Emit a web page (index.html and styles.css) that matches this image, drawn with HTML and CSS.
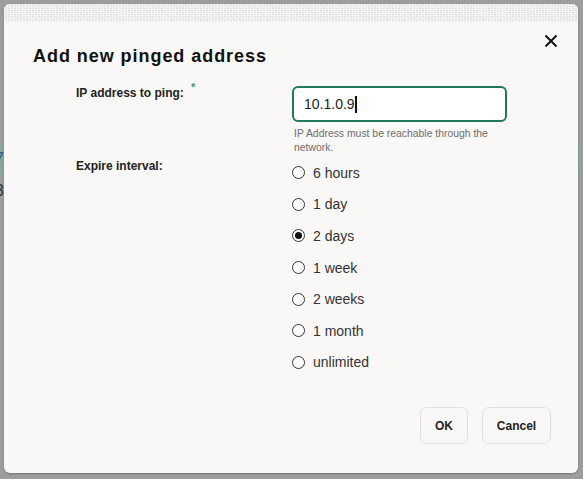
FILE: index.html
```
<!DOCTYPE html>
<html lang="en">
<head>
<meta charset="utf-8">
<title>Add new pinged address</title>
<link rel="stylesheet" href="styles.css">
</head>
<body>
<div class="page">
  <div class="page-row teal"><span class="cell blue">7</span></div>
  <div class="page-row"><span class="cell">3</span></div>
</div>
<div class="overlay">
  <div class="dialog" role="dialog" aria-labelledby="dlg-title">
    <div class="dialog-band"></div>
    <div class="dialog-head">
      <h1 id="dlg-title" class="dialog-title">Add new pinged address</h1>
      <button class="close" aria-label="Close">
        <svg width="14" height="14" viewBox="0 0 14 14"><path d="M1.5 1.5 L12.5 12.5 M12.5 1.5 L1.5 12.5" stroke="#111" stroke-width="2" fill="none"/></svg>
      </button>
    </div>
    <div class="form">
      <div class="label">IP address to ping:<span class="req">*</span></div>
      <div class="field">
        <div class="input"><span class="value">10.1.0.9</span><span class="caret"></span></div>
        <div class="hint">IP Address must be reachable through the network.</div>
      </div>
      <div class="label label-2">Expire interval:</div>
      <div class="field radios">
        <div class="radio"><span class="dot"></span><span class="rlabel">6 hours</span></div>
        <div class="radio"><span class="dot"></span><span class="rlabel">1 day</span></div>
        <div class="radio checked"><span class="dot"></span><span class="rlabel">2 days</span></div>
        <div class="radio"><span class="dot"></span><span class="rlabel">1 week</span></div>
        <div class="radio"><span class="dot"></span><span class="rlabel">2 weeks</span></div>
        <div class="radio"><span class="dot"></span><span class="rlabel">1 month</span></div>
        <div class="radio"><span class="dot"></span><span class="rlabel">unlimited</span></div>
      </div>
    </div>
    <div class="footer">
      <button class="btn">OK</button>
      <button class="btn">Cancel</button>
    </div>
  </div>
</div>
</body>
</html>
```
FILE: styles.css
```
html, body {
  margin: 0;
  padding: 0;
}
body {
  width: 583px;
  height: 479px;
  background: #9d9d9d;
  font-family: "Liberation Sans", Arial, sans-serif;
  overflow: hidden;
  position: relative;
}
.page {
  padding-top: 143px;
}
.page-row {
  height: 32px;
  display: flex;
  align-items: center;
}
.page-row.teal {
  background: #8ea59e;
}
.cell {
  font-size: 16px;
  color: #333;
  margin-left: -5px;
}
.cell.blue {
  color: #2a5a8a;
}
.overlay {
  position: absolute;
  inset: 0;
  padding: 4px 5px 6px 4px;
  box-sizing: border-box;
  display: flex;
}
.dialog {
  flex: 1;
  background: #f9f8f7;
  border-radius: 6px;
  overflow: hidden;
  display: flex;
  flex-direction: column;
  box-shadow: 0 1px 2px rgba(0,0,0,0.25);
}
.dialog-band {
  height: 18px;
  flex: none;
  background-color: #e6e6e5;
  background-image:
    repeating-linear-gradient(90deg, rgba(255,255,255,0.55) 0 1px, transparent 1px 3px),
    repeating-linear-gradient(0deg, rgba(255,255,255,0.45) 0 1px, transparent 1px 2px),
    repeating-linear-gradient(45deg, rgba(200,200,200,0.35) 0 1px, transparent 1px 4px);
}
.dialog-head {
  display: flex;
  align-items: flex-start;
  justify-content: space-between;
  padding: 24px 20px 0 29px;
}
.dialog-title {
  margin: 0;
  font-size: 18px;
  font-weight: bold;
  letter-spacing: 0.95px;
  color: #111;
  line-height: 20px;
}
.close {
  border: 0;
  background: none;
  padding: 0;
  margin-top: -12px;
  width: 14px;
  height: 14px;
  display: flex;
}
.form {
  display: grid;
  grid-template-columns: 216px 215px;
  padding-left: 72px;
  margin-top: 20px;
}
.label {
  font-size: 12px;
  font-weight: bold;
  color: #222;
  line-height: 14px;
  padding-top: 0;
  position: relative;
}
.req {
  position: absolute;
  left: 115px;
  top: -6px;
  color: #3f8f70;
  font-weight: bold;
  font-size: 11px;
}
.label-2 {
  padding-top: 2px;
}
.input {
  height: 32px;
  border: 2px solid #1f7a57;
  border-radius: 6px;
  background: #fff;
  display: flex;
  align-items: center;
  padding-left: 10px;
  font-size: 14px;
  color: #222;
}
.caret {
  display: inline-block;
  width: 2px;
  height: 17px;
  background: #111;
}
.hint {
  font-size: 10.4px;
  line-height: 14px;
  color: #6d6d6d;
  padding-left: 2px;
  margin-top: 5px;
  margin-bottom: 2px;
}
.radios {
  display: flex;
  flex-direction: column;
}
.radio {
  height: 31.6px;
  display: flex;
  align-items: center;
}
.dot {
  width: 11px;
  height: 11px;
  border: 1px solid #333;
  border-radius: 50%;
  box-sizing: content-box;
  margin-right: 8px;
  display: flex;
  align-items: center;
  justify-content: center;
  background: #fff;
}
.radio.checked .dot::after {
  content: "";
  width: 7px;
  height: 7px;
  border-radius: 50%;
  background: #111;
}
.rlabel {
  font-size: 14px;
  color: #333;
}
.footer {
  display: flex;
  justify-content: flex-end;
  gap: 14px;
  padding: 29px 27px 0 0;
}
.btn {
  height: 37px;
  border: 1px solid #e3e1de;
  border-radius: 7px;
  background: #f9f8f7;
  font-family: "Liberation Sans", Arial, sans-serif;
  font-size: 12px;
  font-weight: bold;
  color: #222;
  padding: 0;
}
.btn:first-child {
  width: 48px;
}
.btn:last-child {
  width: 69px;
}
```
